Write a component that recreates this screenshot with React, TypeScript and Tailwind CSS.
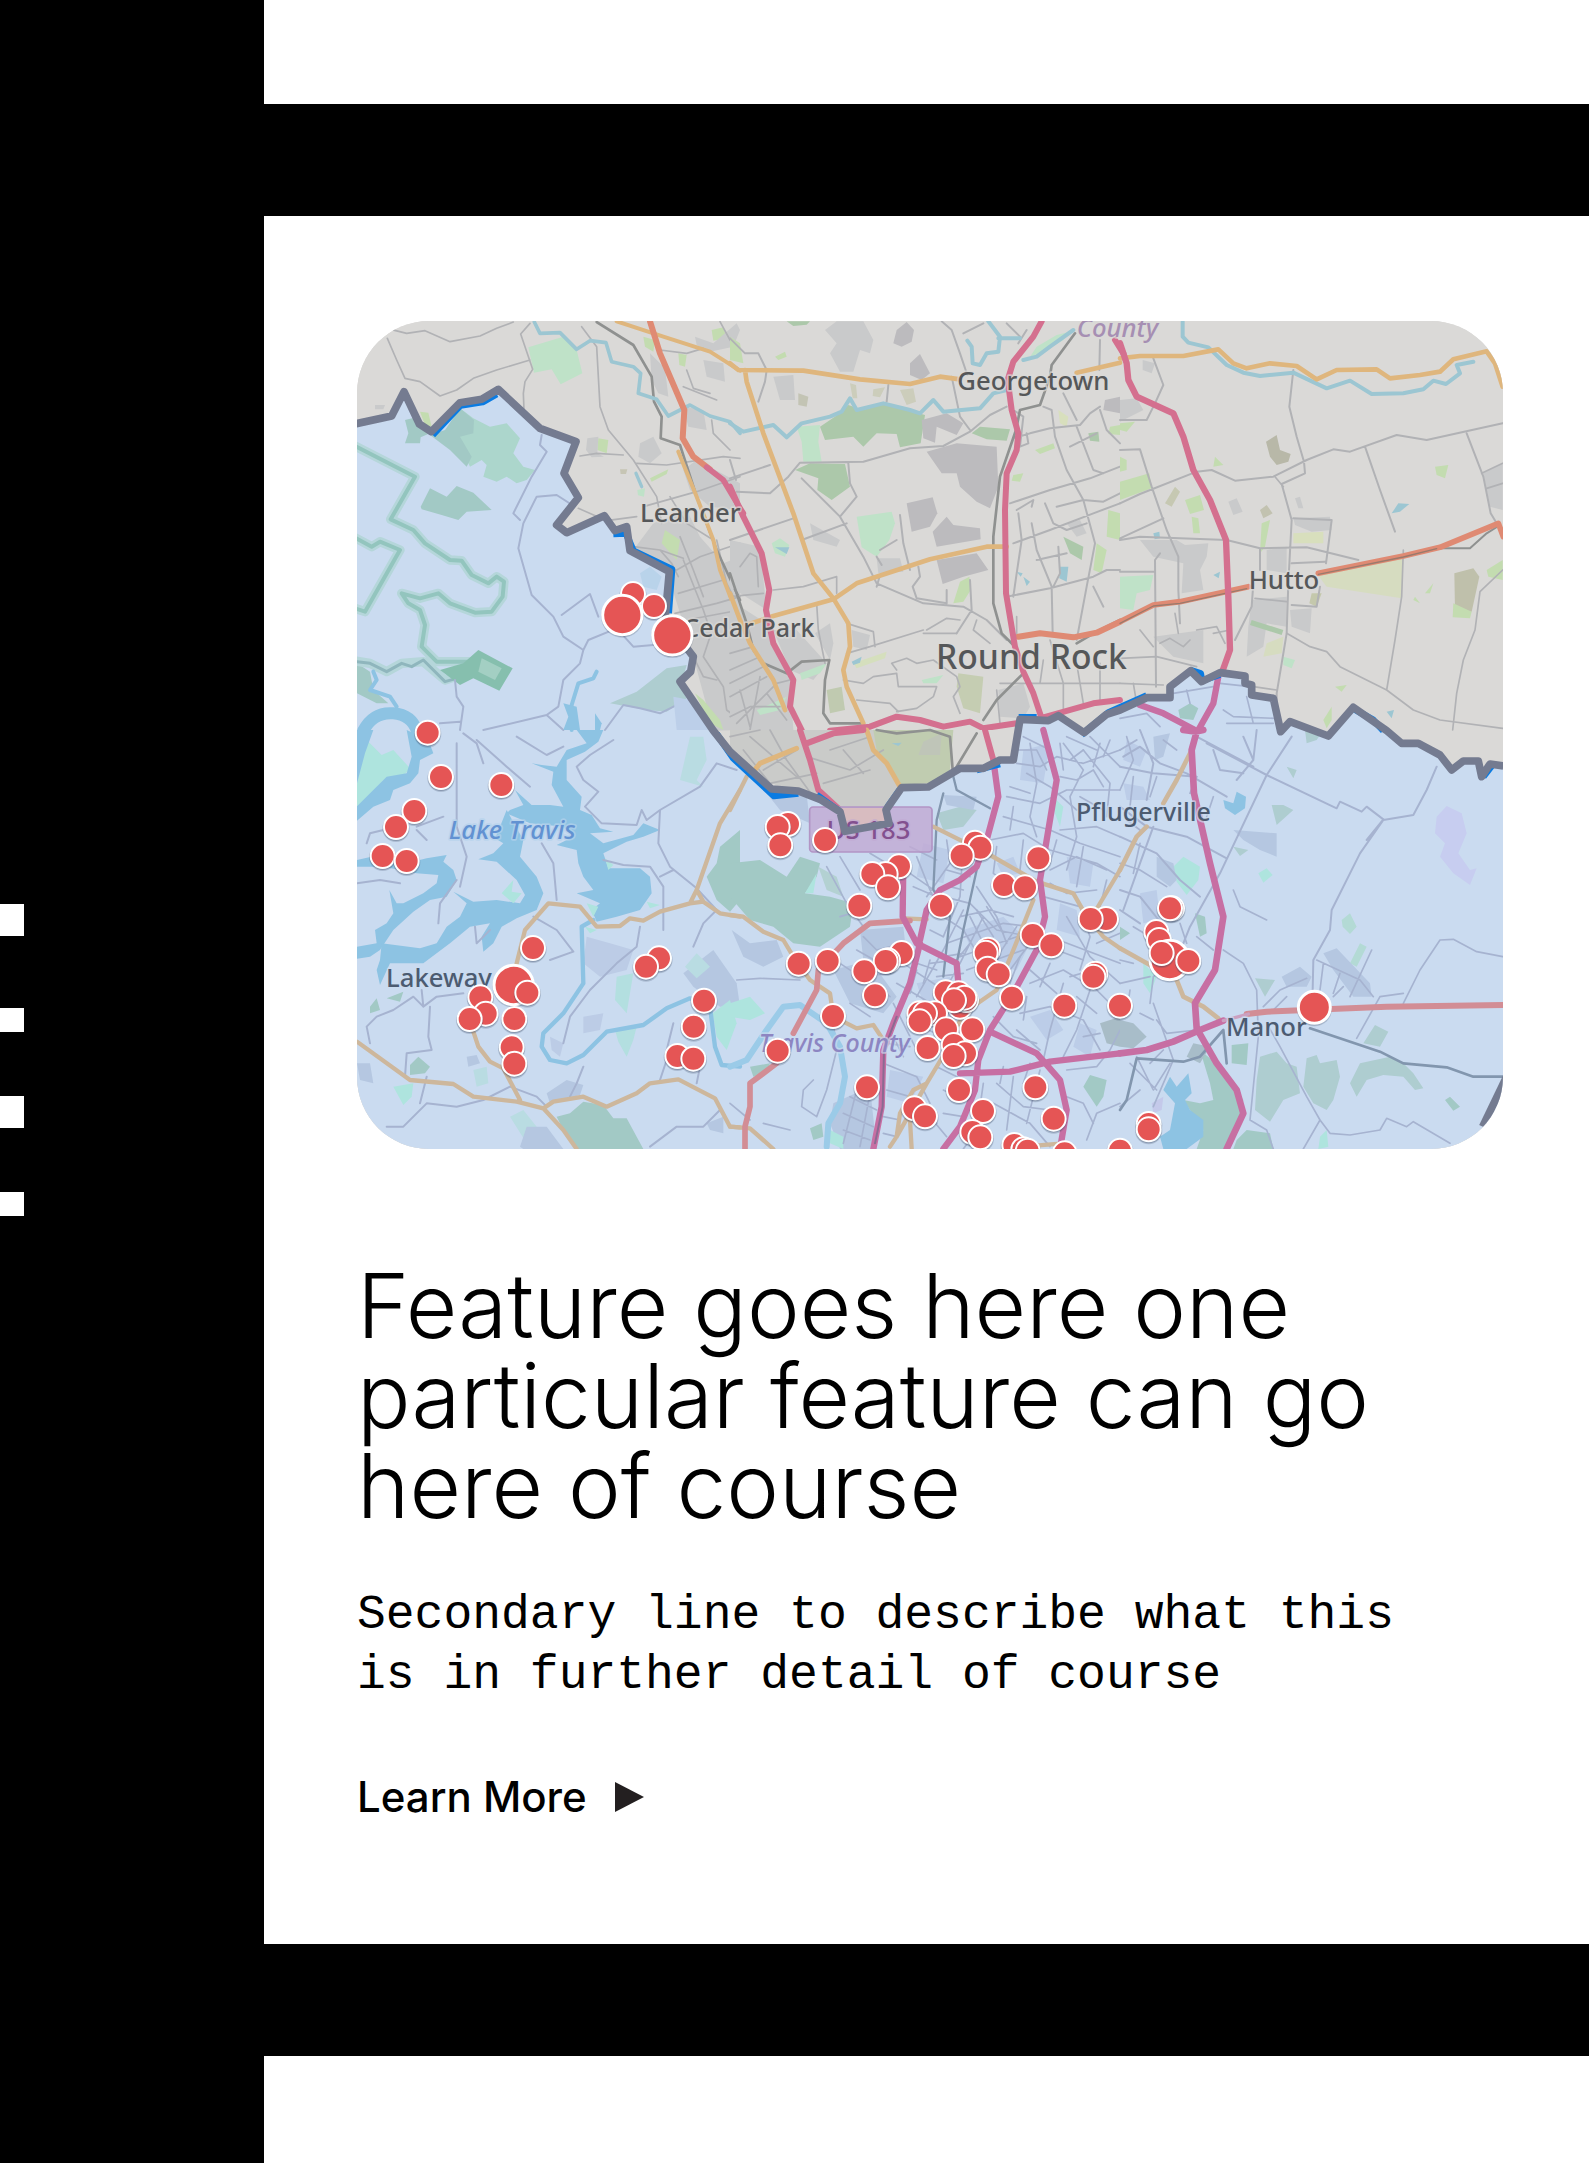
type Shape = { d: string; c: string; w?: number };
type Sheet = { x: number; y: number; shapes: Shape[] };

const MINOR = "#b1b2b5";
const RAIL = "#8f9190";
const ORANGE = "#dfb67d";
const PINK = "#d4708f";
const CORAL = "#df8a73";
const STREAM = "#9cc6d2";
const TOWN = "#c9cacb";
const STONE = "#bcbbbe";
const WOOD = "#acc8aa";
const MINT = "#bfe2c8";
const LIME = "#c3dcb0";

const B_MINOR = "#a6b3d0";
const B_RAIL = "#8296ae";
const B_ORANGE = "#cdb79c";
const B_PINK = "#c76fa3";
const B_CORAL = "#d28d95";
const B_WATER = "#8dc3e3";
const B_WOOD = "#a2c9c5";
const B_PARK = "#aecdd0";
const B_TOWN = "#b5c7e1";
const B_MINT = "#aee4de";
const B_RIDGE = "#93c5be";

const REGION =
  "M0 345L125 318L162 245L208 342L244 365L330 278L395 268L445 238L570 355L678 395L642 490L685 563L620 645L650 668L763 617L795 662L830 650L840 722L958 785L945 930L1030 1040L1022 1085L990 1115L1090 1262L1140 1325L1265 1437L1345 1443L1410 1468L1470 1505L1485 1564L1617 1540L1608 1500L1655 1433L1735 1431L1830 1375L1900 1375L1950 1350L1990 1350L2010 1228L2095 1232L2125 1217L2202 1268L2270 1213L2310 1200L2390 1163L2460 1163L2460 1130L2522 1082L2555 1115L2610 1088L2685 1098L2685 1120L2705 1125L2705 1155L2770 1165L2792 1265L2820 1235L2935 1278L3010 1192L3110 1262L3155 1300L3205 1300L3270 1335L3305 1380L3340 1353L3385 1353L3395 1400L3420 1362L3460 1368";

const SLIVERS =
  "M248 375L332 286L398 276L440 252M790 672L828 670L850 722L966 778L956 910M1100 1272L1150 1345L1272 1458L1345 1450M1400 1455L1466 1502M1612 1492L1650 1438M1880 1380L1950 1362M2006 1222L2060 1222M2195 1274L2275 1208L2390 1157M2520 1080L2552 1090L2556 1112L2610 1094M3010 1196L3070 1230L3100 1262M3400 1400L3425 1368";

const LAND: Sheet[] = [
  {
    x: 0,
    y: 0,
    shapes: [
      { d: "M535 112L640 80L680 120L697 190L632 223L605 178L552 188Z", c: MINT },
      { d: "M745 385L775 390L770 430L742 420Z", c: LIME },
      { d: "M712 385L745 380L742 430L762 440L725 442L708 420Z", c: TOWN },
      { d: "M1085 60L1120 52L1130 85L1090 92Z", c: LIME },
      { d: "M1035 80L1090 100L1160 40L1170 60L1150 110L1080 125L1040 105Z", c: TOWN },
      { d: "M985 130L1010 135L1005 170L988 165Z", c: LIME },
      { d: "M880 80L915 90L910 125L885 110Z", c: LIME },
      { d: "M900 130L945 175L955 260L925 250L905 210Z", c: TOWN },
      { d: "M1060 150L1120 160L1125 215L1070 200Z", c: TOWN },
      { d: "M870 400L910 380L935 430L900 460L865 440Z", c: TOWN },
      { d: "M75 285L105 285L100 298L75 298Z", c: TOWN },
      { d: "M1000 290L1060 300L1070 360L1015 350Z", c: TOWN },
      { d: "M910 640L1010 600L1050 680L1120 760L1170 740L1170 1260L1090 1262L1030 1040L950 780L850 720Z", c: TOWN },
      { d: "M1000 480L1040 450L1170 520L1170 600L1080 590L1020 540Z", c: TOWN },
      { d: "M945 660L990 690L980 750L935 700Z", c: LIME },
      { d: "M862 540L885 535L882 560L864 556Z", c: MINT },
      { d: "M900 505L955 478L950 492L905 515Z", c: LIME },
      { d: "M1035 1150L1060 1170L1110 1230L1120 1260L1080 1240Z", c: LIME },
      { d: "M810 478L832 478L828 492L812 492Z", c: "#c6c5b4" },
      { d: "M210 305L235 308L245 350L225 345Z", c: LIME },
      { d: "M110 55L170 70L225 62L300 95L390 78L440 55L490 36M112 85L140 150L165 205L210 215L270 258L320 240L370 205L440 180L540 150M540 40L512 72L548 178L525 215L520 250L522 300M695 50L740 110L750 290L775 360L850 450L920 560L935 640", c: MINOR, w: 5 },
      { d: "M690 438L740 430L820 435M860 460L950 465L1120 440L1170 445M880 590L1040 545L1170 500M930 720L1000 745M1110 35L1140 90L1170 130M930 120L1010 130L1060 115M1000 230L1100 270M1010 180L1030 235L1080 250M1085 330L1090 370L1140 420M685 595L770 632L860 620M960 560L1010 640L1090 690M850 710L930 720L965 760L985 800M980 780L1050 740L1170 700M985 850L1120 810M1000 750L1060 900L1080 960M990 680L1030 780L1060 860M1080 980L1060 1040L1120 1130L1130 1200L1170 1230M975 910L1100 880L1170 860M1030 1040L1060 1100L1100 1110M1010 930L1170 900M1100 690L1130 820L1150 860", c: MINOR, w: 5 },
      { d: "M740 36L850 105L905 200L912 275L935 320L932 385L990 405L1040 560L1100 720L1170 870", c: RAIL, w: 8 },
      { d: "M553 36L570 70L630 68L680 118L720 92L768 98L785 155L850 170L872 190L865 250L920 268L955 318L1020 285L1080 318L1140 335L1170 370", c: STREAM, w: 11 },
      { d: "M858 490L875 530", c: STREAM, w: 10 },
      { d: "M800 34L940 80L1080 125L1170 182M985 425L1040 560L1090 690L1110 780L1170 935", c: ORANGE, w: 12 },
      { d: "M900 34L930 130L1003 300L998 385L1030 440L1080 478", c: CORAL, w: 18 },
      { d: "M1070 472L1120 510L1160 578L1180 610", c: PINK, w: 17 },
    ],
  },
  {
    x: 1140,
    y: 0,
    shapes: [
      { d: "M285 60L320 34L400 34L430 90L420 130L390 120L370 185L330 185L300 130L320 100Z", c: TOWN },
      { d: "M490 100L500 60L530 36L552 60L545 95L515 110Z", c: STONE },
      { d: "M540 160L570 132L600 190L575 210L540 195Z", c: STONE },
      { d: "M130 200L190 195L195 270L150 270Z", c: TOWN },
      { d: "M205 250L235 260L230 290L205 285Z", c: "#c3c4b4" },
      { d: "M360 220L378 225L382 265L368 265ZM430 238L465 232L450 262L428 258ZM510 240L550 235L558 275L530 285Z", c: "#cccdbb" },
      { d: "M170 34L240 34L230 44L190 48Z", c: WOOD },
      { d: "M135 140L165 125L170 140L145 150Z", c: LIME },
      { d: "M0 80L30 100L40 160L0 150Z", c: LIME },
      { d: "M270 350L330 310L355 285L400 300L460 280L530 300L585 315L572 400L510 412L500 372L440 370L400 410L370 380L285 390Z", c: WOOD },
      { d: "M200 350L270 345L265 395L275 455L220 455L215 395Z", c: MINT },
      { d: "M195 480L240 460L345 462L360 530L305 570L262 540L265 505Z", c: WOOD },
      { d: "M575 330L650 310L700 340L680 375L620 350L615 398L580 385Z", c: STONE },
      { d: "M590 425L680 400L800 410L805 530L780 595L740 575L690 530L680 490L635 490Z", c: STONE },
      { d: "M725 370L750 350L840 358L830 392L770 388Z", c: WOOD },
      { d: "M530 580L608 562L622 610L600 650L545 665Z", c: STONE },
      { d: "M608 665L650 620L670 645L750 655L752 688L620 710Z", c: STONE },
      { d: "M620 750L740 730L775 780L700 800L638 822Z", c: STONE },
      { d: "M380 620L485 605L495 640L478 690L440 740L395 712Z", c: MINT },
      { d: "M440 745L510 745L520 785L445 790Z", c: TOWN },
      { d: "M670 880L690 815L718 800L722 840L700 875Z", c: LIME },
      { d: "M125 700L150 685L178 705L165 740L135 730Z", c: MINT },
      { d: "M135 712L178 712L170 732Z", c: STREAM },
      { d: "M920 110L980 75L1020 65L1000 90L940 125L900 140Z", c: MINT },
      { d: "M850 495L880 490L870 515L845 512Z", c: LIME },
      { d: "M915 420L970 400L975 415L930 432Z", c: LIME },
      { d: "M1075 370L1105 365L1108 395L1080 392Z", c: WOOD },
      { d: "M985 300L1015 320L1010 350L990 340Z", c: "#d8dfbd" },
      { d: "M1000 680L1060 710L1055 750L1020 730Z", c: WOOD },
      { d: "M990 770L1015 770L1010 815L988 805Z", c: STREAM },
      { d: "M1100 700L1130 720L1115 790L1090 780Z", c: LIME },
      { d: "M1135 600L1170 610L1170 690L1130 680Z", c: LIME },
      { d: "M1125 270L1170 260L1170 310L1120 300Z", c: STONE },
      { d: "M1140 350L1170 345L1170 375L1135 372Z", c: LIME },
      { d: "M0 690L90 710L110 900L0 830Z", c: TOWN },
      { d: "M0 870L110 940L180 1100L190 1260L0 1260Z", c: TOWN },
      { d: "M130 960L200 960L290 1060L250 1110L180 1080Z", c: TOWN },
      { d: "M50 910L90 930L95 1040L40 1000Z", c: TOWN },
      { d: "M255 970L300 940L310 1000L300 1050Z", c: TOWN },
      { d: "M365 960L420 975L410 1020L370 1010Z", c: TOWN },
      { d: "M290 1140L335 1130L345 1200L300 1210Z", c: "#c0cab0" },
      { d: "M685 1090L760 1100L750 1210L700 1195L680 1130Z", c: "#c5cdb2" },
      { d: "M80 1200L170 1160L150 1200L90 1215Z", c: MINT },
      { d: "M210 1090L290 1060L270 1090L215 1110Z", c: MINT },
      { d: "M575 1110L640 1095L620 1120L580 1120Z", c: MINT },
      { d: "M370 1060L470 1025L465 1045L380 1075Z", c: "#d5dfbd" },
      { d: "M365 1055L395 1040L390 1058L370 1065ZM860 785L878 790L872 800ZM880 800L900 815L890 828Z", c: STREAM },
      { d: "M805 1140L880 1120L900 1190L880 1225L810 1220Z", c: TOWN },
      { d: "M1010 640L1050 630L1070 670L1040 680Z", c: TOWN },
      { d: "M240 640L330 690L320 710L250 690Z", c: TOWN },
      { d: "M0 85L45 130L85 130L110 180L105 215L85 275M470 275L475 225M635 34L665 60L690 130L712 195M0 450L18 510M0 505L120 465M20 545L120 550L175 500L210 458L400 455L540 415L640 408L720 365L780 315L830 290M215 505L330 620L400 740L440 820L580 880L700 890L770 930L830 990M355 460L360 520L380 560L330 620M510 615L520 700L540 780M0 690L190 625M215 690L350 640M440 830L450 795M450 720L500 690M455 765L440 740M565 770L570 800L548 830L560 865L650 880M650 880L650 840M720 810L725 900L680 970", c: MINOR, w: 6 },
      { d: "M665 200L690 320L720 360M850 385L900 370L960 355M940 290L965 300L975 380L1010 480L1060 570L1095 700L1070 830L1040 990M840 580L960 540L1080 505L1170 470M850 700L960 660L1090 610L1170 580M830 860L960 835L1090 800L1130 780L1170 780M905 640L920 720L965 830L968 970M865 610L875 690L860 790L850 860M945 580L970 640L1010 660L1070 640M960 355L1050 345L1080 310L1110 290M1040 350L1090 480L1120 490M1020 410L1100 370M1110 90L1108 180M985 710L990 790L970 830M920 750L1010 730M1090 830L1120 890M860 600L910 570L905 590M980 590L1060 570L1120 575L1170 550M1000 250L1040 330M1110 300L1130 360L1170 400M700 70L760 40M830 40L870 80M865 100L890 60M850 300L880 320L870 410L895 400L890 370", c: MINOR, w: 6 },
      { d: "M0 860L100 850M30 770L60 730L80 740L85 830M130 840L220 830L320 800L320 850M260 880L265 960L285 1060M350 940L430 965L435 1010M500 1080L485 1060L530 1045L560 1060L610 1050L680 1100L690 1130L670 1160L690 1210M500 1090L505 1130L620 1130L610 1160L560 1195L500 1205M590 960L650 925L690 930M580 970L680 970M340 1110L400 1120L430 1100L500 1090M350 1030L420 1010L580 960M810 1120L1170 1120M960 990L1000 1120L1000 1215M800 1140L810 1240M860 920L860 970L850 1010M380 1170L480 1180L505 1205M0 1080L90 1040M0 1160L110 1100M20 1240L140 1120L180 1110M0 1220L60 1190L150 1190M90 1100L60 1260M740 930L730 960L780 1000M0 1030L70 1010M0 1120L100 1070M30 1140L60 1250M110 1150L170 1230M940 1050L930 1120M1040 1060L1060 1180M1110 1060L1110 1170", c: MINOR, w: 5 },
      { d: "M0 790L50 940L70 1020L100 1060L170 1090L215 1055L298 1050L285 1110L280 1210L300 1240L400 1240M1035 70L965 165L960 200L930 285L870 300L858 360L810 500L790 680L790 880L815 970L850 1005M880 1090L800 1170L760 1230M1040 1000L1100 965L1170 930", c: RAIL, w: 8 },
      { d: "M0 340L40 365L130 345L170 382L215 340L300 320L335 305L360 265L380 300L460 280L540 300L570 310L610 270L640 305L750 295L790 250L830 240M775 34L810 80L805 125L770 130L750 165L728 160L725 110L712 92M805 85L870 85M1030 60L960 110L920 140L880 150", c: STREAM, w: 12 },
      { d: "M0 160L25 180L220 182L390 208L540 222L630 200L690 208M45 180L50 215L100 370L190 610L250 790L310 865L355 940L360 1010L340 1080L350 1130L400 1240M50 945L130 918L310 868L380 820L600 748L770 710L830 710M0 850L30 930L60 1000L130 1110L165 1200M1040 188L1170 158", c: ORANGE, w: 14 },
      { d: "M865 980L930 970L1030 982L1100 968L1170 935", c: CORAL, w: 18 },
      { d: "M935 34L910 80L850 155L833 210L845 300L865 370L860 420L830 490L825 600L828 850L855 1010L880 1085L910 1150L935 1225M1155 90L1180 130M0 530L40 620L95 730L118 840L108 900L130 1000L190 1110L180 1190L215 1260M300 1262L420 1250L500 1220L570 1230L640 1250L720 1235L760 1255L860 1240L930 1225L1090 1180L1170 1170", c: PINK, w: 18 },
    ],
  },
  {
    x: 2310,
    y: 0,
    shapes: [
      { d: "M0 270L50 265L70 300L0 335Z", c: TOWN },
      { d: "M0 340L45 335L20 365L0 360Z", c: LIME },
      { d: "M0 515L88 490L95 535L0 570Z", c: LIME },
      { d: "M0 440L20 450L20 480L0 485Z", c: LIME },
      { d: "M68 150L105 160L95 190L68 180Z", c: TOWN },
      { d: "M438 395L470 375L480 420L512 432L505 455L470 465L450 440Z", c: "#b8b8a8" },
      { d: "M195 570L240 555L252 600L210 612Z", c: LIME },
      { d: "M420 600L440 585L458 610L430 625Z", c: "#c2c2b0" },
      { d: "M425 640L450 630L435 710L420 730Z", c: LIME },
      { d: "M135 580L165 530L180 545L155 590Z", c: "#c6c8b2" },
      { d: "M215 620L235 625L240 670L220 670Z", c: LIME },
      { d: "M325 575L350 565L368 605L340 615Z", c: TOWN },
      { d: "M525 565L540 560L550 595L535 595Z", c: TOWN },
      { d: "M520 625L630 620L635 660L575 665L525 645Z", c: TOWN },
      { d: "M520 670L610 665L610 700L520 700Z", c: "#d8dfbd" },
      { d: "M60 690L170 690L195 705L265 700L260 740L240 780L250 840L185 850L190 760L100 740Z", c: TOWN },
      { d: "M0 800L100 795L90 840L50 850L40 900L0 895Z", c: MINT },
      { d: "M440 720L500 710L500 790L440 780Z", c: TOWN },
      { d: "M395 870L500 860L500 950L440 940L430 1010L380 1040L385 950Z", c: TOWN },
      { d: "M510 900L575 895L570 970L515 950Z", c: TOWN },
      { d: "M590 790L850 745L845 865L620 830Z", c: "#d6dcc0" },
      { d: "M1003 790L1060 775L1078 800L1055 905L1005 900Z", c: "#bfc0ab" },
      { d: "M1000 880L1055 905L1050 925L998 922Z", c: LIME },
      { d: "M1100 780L1148 750L1148 810L1105 800Z", c: LIME },
      { d: "M1090 490L1148 460L1148 600L1110 590Z", c: TOWN },
      { d: "M945 470L985 465L975 505L950 495Z", c: LIME },
      { d: "M815 610L835 580L868 582L840 605Z", c: STREAM },
      { d: "M100 670L118 665L120 685L104 688ZM280 795L300 785L296 805ZM800 1205L822 1200L815 1225Z", c: STREAM },
      { d: "M575 850L605 850L590 890L568 880Z", c: "#c4c8ac" },
      { d: "M395 930L490 960L485 975L390 945Z", c: WOOD },
      { d: "M490 1040L525 1050L515 1075L490 1065Z", c: MINT },
      { d: "M645 1130L680 1125L665 1145Z", c: LIME },
      { d: "M610 1230L635 1190L635 1230L620 1255Z", c: LIME },
      { d: "M440 1000L490 980L485 1030L430 1040Z", c: "#d6dcc0" },
      { d: "M285 440L310 465L280 470ZM915 850L940 820L930 850ZM885 860L900 880L880 870Z", c: LIME },
      { d: "M100 980L250 960L250 1060L160 1040Z", c: TOWN },
      { d: "M520 180L508 290L530 380L552 455L555 490L485 522L515 630L505 820L500 970L470 1150L470 1200M735 410L780 540L825 665M1040 370L1090 500L1112 610L1130 640M0 580L60 552L230 485L275 480L345 512L460 500L560 450L640 418L690 425L830 375L920 390L1148 340M100 145L130 225L105 280L80 330L0 330M0 420L60 418L95 530L140 660L175 740L175 840L180 940M0 685L130 625M0 690L60 680L320 690L420 715L560 712L715 750M120 730L105 750L108 1130M0 785L105 785M400 820L395 890L345 990M420 715L420 780M520 625L635 630L618 760M515 760L615 755M515 885L590 890L600 830", c: MINOR, w: 6 },
      { d: "M850 720L845 860L825 990L800 1140M500 970L570 1010L620 1025L660 1070L800 1140L880 1200L960 1230L1148 1255M1148 780L1080 845L1065 960L1030 1050L1010 1150L998 1260M405 865L500 875M0 1045L110 1040L230 1070M165 910L175 970M280 970L330 960M0 1120L130 1125M40 1120L50 1180M60 960L100 1010M230 960L290 950L315 1000M1085 490L1148 460M1100 535L1148 520M465 500L490 530M400 1130L470 1140M120 1000L150 985L190 1010L210 990", c: MINOR, w: 5 },
      { d: "M950 715L1050 715L1100 670L1140 645", c: RAIL, w: 6 },
      { d: "M188 36L188 80L205 98L265 112L320 165L370 188L420 198L520 188L620 235L690 212L755 252L850 250L910 238L940 212L978 222L1020 190L1010 165L1060 155", c: STREAM, w: 12 },
      { d: "M0 145L60 138L190 138L295 118L340 160L380 175L450 160L530 168L590 208L650 180L770 178L810 205L900 195L960 185L1000 148L1100 124L1125 160L1148 230", c: ORANGE, w: 14 },
      { d: "M0 935L100 885L180 875L385 830M595 790L850 738L960 712L1135 640L1150 680", c: CORAL, w: 17 },
      { d: "M0 940L100 888L180 880L380 836M595 793L850 741L950 716", c: "#9a7a6c", w: 4 },
      { d: "M0 100L20 160L25 210L50 260L160 310L190 380L220 480L270 570L318 690L325 860L330 1020L305 1090", c: PINK, w: 19 },
    ],
  },
  {
    x: 1140,
    y: 1260,
    shapes: [
      { d: "M0 0L460 0L520 170L440 260L340 290L0 80Z", c: "#cacbc9" },
      { d: "M430 0L670 0L660 120L600 160L510 165L440 60Z", c: "#c0ccb0" },
      { d: "M565 75L580 35L635 10L630 75Z", c: "#bfc5b8" },
      { d: "M690 100L740 0L860 0L840 90Z", c: "#dad9d7" },
      { d: "M485 40L515 38L505 48Z", c: STREAM },
      { d: "M0 20L90 0M100 120L200 60M40 60L120 160L260 130M230 80L360 120L460 60M280 160L420 120M60 20L200 140M120 0L170 90L250 200M300 60L420 20M340 60L400 130", c: MINOR, w: 5 },
      { d: "M440 0L500 10L600 0L660 20L668 120M740 10L680 110", c: RAIL, w: 8 },
      { d: "M410 0L430 60L470 100L510 170L550 225M200 55L90 100L50 150L0 240", c: ORANGE, w: 15 },
      { d: "M210 0L240 90L265 180L330 240M230 40L310 10L400 0M765 0L790 90", c: PINK, w: 18 },
    ],
  },
];

const COUNTY: Sheet[] = [
  {
    x: 0,
    y: 0,
    shapes: [
      { d: "M165 330L205 320L240 370L212 382L210 400L165 400L175 370Z", c: B_WOOD },
      { d: "M285 370L330 295L370 325L420 350L470 340L510 385L490 430L520 470L555 480L530 510L500 520L470 500L440 515L400 500L410 465L395 450L360 470L340 430L320 420L270 385Z", c: "#acd6cc" },
      { d: "M240 375L285 360L330 295L372 330L370 370L330 380L365 440L350 470L300 420Z", c: B_WOOD },
      { d: "M212 590L240 535L290 560L320 528L370 548L425 600L350 605L325 630L275 615L215 598Z", c: B_WOOD },
      { d: "M780 1180L860 1145L950 1075L1010 1065L1000 1100L985 1120L1010 1165L950 1205L890 1200Z", c: B_PARK },
      { d: "M870 790L900 770L935 800L920 840L880 830Z", c: "#b9d3ea" },
      { d: "M21 1060L60 1085L70 1140L115 1180L80 1180L21 1150Z", c: B_WOOD },
      { d: "M0 400L195 500L122 628L190 660L225 700L300 750L335 752L365 795L415 820L440 800L462 815L458 860L425 905L375 908L300 880L265 850L210 865L155 850L175 880L210 900L225 945L215 1010L260 1055L355 1055M0 675L65 710L90 695L150 720L45 905L0 890M0 1050L60 1060L110 1085L155 1060L220 1055L285 1110L345 1090", c: "#b5d6da", w: 28 },
      { d: "M0 400L195 500L122 628L190 660L225 700L300 750L335 752L365 795L415 820L440 800L462 815L458 860L425 905L375 908L300 880L265 850L210 865L155 850L175 880L210 900L225 945L215 1010L260 1055L355 1055M0 675L65 710L90 695L150 720L45 905L0 890", c: B_RIDGE, w: 12 },
      { d: "M21 1055L60 1060L110 1085L155 1060L185 1070L220 1050L285 1115L320 1105", c: "#8fb6bd", w: 9 },
      { d: "M340 1060L385 1020L488 1075L448 1142L370 1105L330 1125L270 1080Z", c: "#86bfae" },
      { d: "M395 1045L455 1075L435 1110L385 1085Z", c: "#a3cfc3" },
      { d: "M575 375L570 405L590 425L545 500L490 610L510 630M620 555L560 560L520 640L505 715L545 855L610 920L640 980L700 1020M620 555L690 600M635 915L720 852L745 920M700 1020L715 990L800 955L850 1010L910 1005M700 1020L690 1060L640 1110L625 1190L590 1215L400 1260M590 1215L640 1260M765 1260L820 1185L870 1195L930 1210L990 1180M315 1110L320 1160L340 1190L330 1260M270 1240L330 1235", c: B_MINOR, w: 6 },
      { d: "M740 1085L730 1105L685 1120L665 1185L665 1260", c: B_WATER, w: 12 },
      { d: "M640 1180L680 1190L690 1260L640 1260L655 1220Z", c: B_WATER },
      { d: "M735 1210L755 1240L750 1260L735 1260Z", c: B_WATER },
      { d: "M70 1085L80 1110L60 1140L120 1160L140 1190", c: B_WATER, w: 12 },
      { d: "M40 1262Q70 1205 130 1210Q185 1215 200 1262", c: B_WATER, w: 36 },
      { d: "M970 1160L1050 1175L1090 1260L980 1260Z", c: "#bccfe9" },
    ],
  },
  {
    x: 0,
    y: 1260,
    shapes: [
      { d: "M50 30L95 75L130 60L180 115L150 150L100 150L21 240L21 160Z", c: B_MINT },
      { d: "M0 0L70 0L45 70L21 160L0 160Z", c: B_WATER },
      { d: "M170 0L235 30L250 70L210 90L205 130L180 160L130 180L120 210L70 230L0 290L0 250L70 180L110 140L170 130L185 80Z", c: B_WATER },
      { d: "M21 390L110 370L170 400L230 385L290 375L280 395L310 420L320 450L290 500L240 510L190 545L130 600L90 660L60 680L0 690L21 650L80 640L75 600L110 580L130 550L118 480L140 520L160 520L220 490L260 460L265 435L200 430L100 410L21 410Z", c: B_WATER },
      { d: "M90 690L95 640L210 655L260 640L290 590L330 560L350 520L310 485L370 515L440 510L510 520L525 495L500 450L440 395L385 388L430 370L460 340L435 325L450 290L470 240L520 330L510 380L560 440L580 490L560 540L500 565L455 590L430 640L400 665L395 620L420 580L360 590L300 640L220 700L120 700L90 765L80 720Z", c: B_WATER },
      { d: "M680 0L760 0L745 35L705 65L650 90L650 150L695 200L690 240L725 255L750 295L790 305L720 310L760 340L850 315L880 280L930 300L880 320L830 335L760 370L775 415L870 415L900 440L905 490L870 540L800 560L740 575L725 540L750 520L680 490L730 480L700 440L685 400L680 360L620 345L670 320L640 290L540 280L470 250L480 240L520 225L495 180L545 225L600 225L640 230L605 165L610 125L545 100L575 105L620 110L650 60L710 40Z", c: B_WATER },
      { d: "M455 490L490 450L485 485L515 490L490 520Z", c: B_MINT },
      { d: "M765 385L790 405L775 420Z", c: B_MINT },
      { d: "M990 150L1020 20L1060 20L1070 90L1040 150L1060 170Z", c: "#b9dce2" },
      { d: "M1070 440L1100 400L1110 350L1170 300L1170 510L1140 545L1100 510Z", c: B_WOOD },
      { d: "M710 520L745 530L730 560ZM890 515L930 525L900 535ZM705 590L740 600L720 610Z", c: B_MINT },
      { d: "M710 620L780 640L850 660L830 720L750 740L700 700ZM700 860L760 850L750 900L700 910ZM600 920L640 940L630 980L605 960Z", c: "#bccce6" },
      { d: "M1000 730L1090 660L1160 760L1170 830L1110 830L1030 770Z", c: B_TOWN },
      { d: "M1005 710L1040 670L1080 710L1040 745Z", c: "#b9dce2" },
      { d: "M1088 850L1140 810L1160 880L1130 960L1100 920Z", c: B_MINT },
      { d: "M795 900L860 890L850 930L830 980L805 935ZM800 740L850 730L830 850L795 810Z", c: "#b3dfe0" },
      { d: "M180 1005L205 980L240 1010L225 1030L180 1035ZM60 830L80 805L90 840L60 850ZM110 805L160 785L150 815Z", c: B_WOOD },
      { d: "M130 1070L190 1060L185 1100L160 1125Z", c: B_MINT },
      { d: "M370 1020L410 1010L415 1060L380 1070ZM480 1160L520 1140L560 1190L530 1240Z", c: "#b9dce2" },
      { d: "M350 980L380 975L390 1000L355 1010ZM21 1000L60 1000L70 1060L30 1050Z", c: B_TOWN },
      { d: "M510 1250L530 1190L590 1190L640 1257L520 1257Z", c: B_TOWN },
      { d: "M620 1160L660 1150L700 1115L760 1125L790 1165L830 1165L860 1220L880 1257L680 1257L640 1200Z", c: B_WOOD },
      { d: "M590 1090L650 1050L700 1065L690 1095L600 1120ZM1070 1180L1120 1160L1120 1210L1080 1200Z", c: B_TOWN },
      { d: "M320 40L320 290L350 380L330 470M340 10L380 40L400 100M380 30L470 110L540 170M500 20L590 75L640 50M790 30L720 75L680 110L700 150L745 185L705 230L755 280L860 285L875 240L890 270L930 240L1050 170L1100 100L1160 120M930 240L925 340L960 410L1040 475L1100 540L1060 580L1030 650M575 340L610 400L620 510M21 460L90 450L150 460M320 450L270 520L265 580M50 340L60 310L100 300L150 310M200 290L280 260M200 300L230 330M760 390L820 405L900 410L940 470L940 600M930 440L970 420M375 590L380 640L420 600M550 560L620 600L670 665L600 690M870 590L860 650L800 700L720 780L660 860L640 940", c: B_MINOR, w: 6 },
      { d: "M60 940L50 890L80 860L130 840L190 800L220 830L260 800L340 790M215 780L220 830M240 830L235 920L245 960L170 970L165 1040M230 1040L210 1120M110 1190L160 1190L230 1120L320 1130L400 1110L480 1070M345 870L370 900M480 1070L560 1100L590 1130M700 1010L680 1060L660 1100M950 990L930 1050M1050 1010L1040 1060M900 1250L980 1190L1060 1190L1110 1140M970 880L950 960", c: B_MINOR, w: 6 },
      { d: "M730 570L695 590L700 760L640 850L580 910L575 950L600 990L650 1000L700 975L770 905L880 885L950 835L1020 805L1080 830L1095 950L1115 1005L1170 1010", c: B_WATER, w: 13 },
      { d: "M495 720L525 600L595 520L690 530L740 590L810 588L840 565L880 572L930 545L1020 520L1040 480L1110 280L1170 180M1040 480L1060 515L1110 550L1170 560M1020 520L1060 515M21 935L180 1050L310 1062L370 1100L500 1115L580 1135L640 1200L680 1257M370 905L385 950L420 995L460 1015L510 1110M580 1135L610 1115L700 1100L770 1130L860 1090L900 1060L985 1048L1095 1105L1140 1190L1170 1192", c: B_ORANGE, w: 13 },
    ],
  },
  {
    x: 1140,
    y: 1260,
    shapes: [
      { d: "M0 400L90 390L170 440L210 380L270 400L260 440L225 490L300 500L370 520L360 590L270 650L190 640L130 590L60 570L0 500Z", c: B_WOOD },
      { d: "M265 410L320 440L340 500L290 480Z", c: "#b3d1d2" },
      { d: "M225 490L260 430L250 490Z", c: B_MINT },
      { d: "M5 600L60 640L140 630L160 680L100 710L40 680Z", c: B_TOWN },
      { d: "M0 820L60 800L105 850L60 870L0 860Z", c: B_MINT },
      { d: "M620 250L690 230L740 240L700 290L640 300Z", c: B_PARK },
      { d: "M640 195L740 200L730 240L650 225Z", c: B_TOWN },
      { d: "M110 190L230 195L240 280L150 240Z", c: B_TOWN },
      { d: "M390 600L520 590L530 680L450 730L400 690ZM310 720L420 690L500 800L460 850L360 820Z", c: B_TOWN },
      { d: "M310 1120L420 1070L440 1257L330 1257L300 1180Z", c: B_TOWN },
      { d: "M560 760L660 740L700 860L600 880ZM700 600L820 560L900 640L860 720L740 700Z", c: "#bccde8" },
      { d: "M580 340L660 360L640 460L560 440ZM880 60L960 40L940 160L870 150ZM1010 380L1090 400L1080 470L1020 460ZM990 520L1040 540L1050 620L980 600ZM480 1020L580 1040L540 1120L470 1100Z", c: "#bccde8" },
      { d: "M800 400L850 380L870 430L820 440ZM900 860L960 840L1000 900L950 930ZM1050 880L1100 900L1080 980L1030 950Z", c: "#bccde8" },
      { d: "M240 1195L275 1180L280 1220L250 1230Z", c: B_WOOD },
      { d: "M1060 1070L1080 1035L1130 1050L1120 1100L1100 1130Z", c: B_WOOD },
      { d: "M1110 880L1170 860L1170 950L1130 940Z", c: "#a8bcc6" },
      { d: "M300 1200L340 1220L340 1257L300 1240ZM760 1130L800 1150L770 1170Z", c: B_MINT },
      { d: "M970 200L1000 230L990 290L975 250Z", c: B_MINT },
      { d: "M60 1010L120 1000L110 1030L70 1040Z", c: B_WOOD },
      { d: "M210 750L90 745L20 750M290 410L350 520L400 590M330 380L390 480M310 880L320 960L290 1080L260 1160M260 1160L215 1130L220 1080L250 1050M100 1180L180 1200M0 1120L60 1170M420 370L470 400M560 380L600 480L640 560M700 330L690 500L640 620M650 330L660 400L590 500M540 430L640 500L720 520L800 600L900 620M640 560L700 600L760 700L830 770M600 700L680 690L720 640M620 740L700 730M740 470L800 560L830 640M690 560L780 540L850 560M650 640L820 580L900 590M690 680L860 620M710 720L880 660M560 800L640 660L700 540M600 860L690 700L760 560M790 700L860 590M840 720L900 640", c: B_MINOR, w: 5 },
      { d: "M860 100L930 110L980 80L1060 100L1170 60M830 200L930 220L1010 180L1170 180M820 260L960 300L1050 340L1170 380M900 40L920 160L900 260L920 320M1000 40L1060 120L1020 200L1040 320L1010 420M1060 60L1140 160L1130 260M1080 20L1170 110M860 60L920 60L950 120M990 140L1040 150L1090 120L1120 170M990 300L1100 290L1170 320M780 330L880 310L960 360L1100 400L1170 440M960 420L1040 380L1130 420M940 500L1050 530L1080 620L1050 720M1010 560L1080 680L1170 760M960 620L1170 700M900 760L1000 720L1100 780L1150 830M870 850L960 830L1060 870L1110 960M1000 760L960 900L940 990M1080 780L1040 900L1000 980M860 900L930 960M1070 1230L1100 1150L1170 1120M790 860L850 920L920 940", c: B_MINOR, w: 5 },
      { d: "M460 1000L560 1040L600 1120M470 1080L540 1100M620 1010L720 1060M640 1080L700 1110M360 1100L440 1140M340 1150L430 1190M340 1200L420 1230M380 1080L340 1240M420 1090L390 1250M760 1060L740 1200L700 1257M800 1060L880 1130L960 1140M790 1120L900 1180L960 1250M850 1040L830 1200M930 1020L890 1180M1010 1020L1100 1010L1140 960L1170 900M1010 1100L1060 1120L1090 1180M480 900L520 980M490 820L560 960M500 760L620 830M520 700L640 780M550 880L640 920M470 940L540 950", c: B_MINOR, w: 5 },
      { d: "M880 20L960 60M890 130L960 170L1040 240M1010 20L1100 60M1050 200L1120 240M840 170L900 190M990 40L1000 120M1110 40L1090 110M1020 90L1060 60M1140 30L1120 80M850 230L840 300M880 330L870 420M800 350L790 430L860 480M980 330L960 400M1060 350L1040 470M960 460L1010 490L1100 480M1130 450L1110 530M980 660L1060 690M1100 640L1170 610M1020 740L1090 720M870 680L840 760M960 700L930 770M900 720L980 790M1040 800L1100 850M890 800L880 870M1060 920L1110 910", c: B_MINOR, w: 5 },
      { d: "M540 350L620 390M550 470L620 500M600 600L640 620M650 420L720 440M660 470L700 480M720 560L760 640M740 540L790 620M770 530L820 610M640 680L700 670M530 640L560 700L620 720M560 720L540 790M600 690L580 760M330 560L400 540M400 620L440 660L520 640M380 660L450 700M330 700L390 740L480 730M430 760L480 800M360 820L420 860M820 1010L810 1060M900 1000L880 1060M640 1150L700 1160M600 1160L650 1220M560 1150L620 1180M460 1160L510 1170M460 1210L500 1220", c: B_MINOR, w: 5 },
      { d: "M665 120L680 180L780 235M640 190L620 270L610 480L660 560L640 740M740 420L700 600L680 700", c: B_RAIL, w: 7 },
      { d: "M0 1010L50 990L110 900L160 830L210 825L290 880L330 950L345 1040L330 1120L295 1180L290 1250", c: "#9bcbe8", w: 18 },
      { d: "M0 555L40 560L100 605L160 630L190 680L240 750L300 790L310 860L380 895L430 885L460 930M520 565L590 568M610 290L780 375L920 455L1030 490L1070 560L1120 620L1170 655M1170 420L1080 570M910 510L850 660L800 780L700 850L650 960L590 1060L500 1220L480 1250M590 1060L550 1080L510 1150L500 1220M540 1170L545 1257M0 1190L60 1195L130 1257M880 1250L1000 1240M0 240L50 140", c: B_ORANGE, w: 13 },
      { d: "M540 572L420 580L340 640L265 720L260 780L190 910M140 1000L60 1060L60 1130L45 1190L45 1257", c: B_CORAL, w: 17 },
      { d: "M790 90L805 200L770 330L740 410L690 450L630 480L590 540L570 630M520 400L518 560L560 640L680 700L685 760M570 640L540 760L490 880L460 960L455 1130L430 1257M940 0L980 150L950 330L930 450L945 560L920 660L850 790L780 900L745 990L735 1080L690 1190L640 1257M690 1030L840 1025L960 995L1170 970M780 905L920 970L990 1050L1010 1140L990 1257", c: B_PINK, w: 19 },
      { d: "M500 860L462 960L458 1130L435 1240", c: "#8b6a92", w: 6 },
    ],
  },
  {
    x: 2310,
    y: 0,
    shapes: [
      { d: "M175 1200L210 1180L235 1195L220 1230L180 1225Z", c: B_WOOD },
      { d: "M160 1150L280 1130M200 1140L210 1180M310 1200L340 1220L460 1225M320 1240L460 1240M300 1120L390 1130M0 1225L80 1210L120 1250M380 1160L400 1240", c: B_MINOR, w: 5 },
      { d: "M60 1185L130 1210L225 1260M295 1100L280 1180L235 1260", c: B_PINK, w: 19 },
      { d: "M-80 1165L0 1170", c: B_PINK, w: 18 },
    ],
  },
  {
    x: 2310,
    y: 1260,
    shapes: [
      { d: "M310 210L340 220L350 185L378 200L375 235L345 255L315 235Z", c: B_WATER },
      { d: "M160 410L190 380L240 410L235 450L200 495L170 455Z", c: B_MINT },
      { d: "M100 20L150 10L130 80L105 90ZM110 380L160 400L170 450L150 470L110 440ZM340 300L470 310L470 380L420 360L370 330Z", c: B_TOWN },
      { d: "M455 225L490 225L520 240L470 285ZM500 110L530 120L520 145ZM340 350L385 360L360 378Z", c: B_PARK },
      { d: "M555 0L610 0L590 30L560 40Z", c: B_PARK },
      { d: "M415 430L440 415L458 435L430 458Z", c: B_MINT },
      { d: "M950 260L980 228L1025 250L1040 310L1015 370L1050 420L1070 415L1050 465L1000 430L960 380L975 340L945 310Z", c: "#c7cdf0" },
      { d: "M665 570L690 550L710 590L690 612L668 590ZM690 700L720 640L740 650L710 710Z", c: "#b3dad5" },
      { d: "M610 670L650 655L750 760L755 800L700 800L640 720ZM485 740L540 710L575 740L560 770L500 770Z", c: B_TOWN },
      { d: "M60 490L110 480L120 570L70 580ZM20 30L80 60L60 110L10 90ZM10 160L70 170L90 210L20 210Z", c: "#bccde8" },
      { d: "M405 745L465 750L435 800ZM730 940L765 885L805 905L780 950Z", c: B_PARK },
      { d: "M420 980L470 965L500 1000L530 1010L540 1090L490 1110L450 1175L405 1140L410 1050Z", c: B_PARK },
      { d: "M560 985L590 975L600 1000L650 990L660 1040L640 1110L620 1140L580 1120L550 1070Z", c: B_PARK },
      { d: "M690 1060L720 1000L810 980L850 1000L880 1030L910 1075L885 1080L850 1040L790 1035L740 1050L710 1100Z", c: B_PARK },
      { d: "M335 945L385 940L380 1005L335 1000ZM975 1110L990 1100L1020 1130L1000 1142Z", c: B_WOOD },
      { d: "M240 960L300 1010L370 1110L360 1170L320 1257L230 1257L250 1200L190 1110L240 1120L280 1110L270 1060Z", c: B_WOOD },
      { d: "M350 1230L380 1200L450 1210L460 1257L340 1257Z", c: B_WOOD },
      { d: "M130 1080L150 1040L170 1070L205 1030L215 1090L195 1110L210 1140L250 1170L250 1220L200 1257L130 1257L120 1220L150 1200L165 1120Z", c: B_WATER },
      { d: "M0 870L40 880L80 920L40 955L0 950ZM200 980L220 940L270 950L240 1000Z", c: "#a8bdc9" },
      { d: "M95 1120L130 1100L125 1140L100 1150Z", c: "#c4c9ea" },
      { d: "M0 590L30 610L0 630ZM225 550L255 560L260 610L240 620Z", c: B_WOOD },
      { d: "M70 700L110 740L90 790L70 760ZM600 1220L620 1200L625 1250L595 1257Z", c: B_MINT },
      { d: "M10 80L60 50L120 100L200 130L320 200M260 40L440 135L650 235L660 215L725 245L740 230L790 268M515 20L440 135L300 430L210 590L150 740M230 20L400 110M370 20L400 90L350 150M410 0L400 90M280 60L300 120L370 130M0 60L50 30M0 110L100 130L230 140M60 0L100 100L80 210M0 230L80 290L200 320L320 385M100 290L60 400L10 540M0 320L110 370L180 450L240 500M0 480L60 500L140 600M0 540L60 580M950 110L920 180L880 255L790 270L720 370L635 540L630 600L580 690L578 780M790 268L740 330", c: B_MINOR, w: 6 },
      { d: "M590 690L720 750L760 800M755 660L690 800M780 800L710 925M310 660L370 700L410 780L415 920L390 1170L440 1200L460 1257M440 880L480 950L560 1100L600 1170L630 1210L690 1215L780 1200L800 1165L860 1190L880 1175L990 1240M600 1170L550 1257M850 820L900 720L960 630L1000 628L1070 665L1148 680M850 790L780 800M430 830L480 780L560 745M460 840L500 800M640 800L670 770M100 820L160 990L100 1130M90 820L100 740L150 700M0 760L90 740M110 870L140 910L230 900M340 480L360 530L440 570M610 700L600 780M660 730L640 790M0 1130L60 1080M30 1000L110 1080M50 980L100 1080L150 1000", c: B_MINOR, w: 5 },
      { d: "M20 20L40 90L0 180M130 30L170 60M40 140L30 230M110 140L90 200M20 270L60 300M230 140L210 190M280 200L260 260M60 340L40 430M0 400L60 420L140 470M40 590L90 620M0 690L40 700M230 620L280 660M180 580L200 640M30 780L20 850M60 850L100 870M130 960L90 1000", c: B_MINOR, w: 5 },
      { d: "M570 895L780 965L850 1000L980 1012L1060 1040L1148 1040M310 900L240 980L190 995L50 985L20 1110L0 1140M310 900L320 1000", c: B_RAIL, w: 8 },
      { d: "M215 60L170 150L130 220M80 290L50 320L0 420M0 655L90 705L170 750L190 800L250 830L295 865", c: B_ORANGE, w: 14 },
      { d: "M380 852L440 845L800 830L1148 825", c: B_CORAL, w: 18 },
      { d: "M190 0L230 5L215 60L222 190L245 290L270 400L310 560L285 720L225 820L230 895L290 1000L350 1080L370 1150L320 1257M0 970L80 960L160 935L240 900L310 872M225 5L250 0", c: B_PINK, w: 20 },
      { d: "M310 872L385 852", c: "#cba0c0", w: 10 },
    ],
  },
];

type Pin = [x: number, y: number, r?: number];

const PINS: Pin[] = [
  [849, 852], [912, 888], [817, 915, 56], [967, 976, 56],
  [233, 1268], [273, 1401], [454, 1425], [193, 1503], [138, 1551], [98, 1638], [170, 1653], [549, 1914],
  [491, 2025, 56], [532, 2048], [391, 2062], [407, 2111], [359, 2127], [493, 2127], [485, 2212], [493, 2261],
  [927, 1945], [888, 1970], [1062, 2072], [1031, 2150], [982, 2238], [1030, 2246],
  [1314, 1542], [1283, 1551], [1291, 1606], [1425, 1590], [1647, 1669], [1607, 1692], [1567, 1692], [1614, 1732],
  [1528, 1787], [1773, 1787], [1875, 1598], [1891, 1613], [1835, 1637], [2065, 1645], [1962, 1725], [2025, 1732],
  [2268, 1827], [2222, 1827], [2048, 1875], [2104, 1906], [1346, 1961], [1433, 1953], [1655, 1929], [1614, 1951],
  [1607, 1953], [1543, 1984], [1575, 2056], [1449, 2118], [1914, 1919], [1907, 1928], [1913, 1976], [1946, 1993],
  [1986, 2063], [2236, 1991], [2230, 2000], [2143, 2087], [2310, 2087], [1283, 2222],
  [1787, 2047], [1826, 2050], [1830, 2090], [1848, 2070], [1843, 2063], [1812, 2071], [1708, 2110], [1755, 2110],
  [1725, 2110], [1709, 2134], [1788, 2158], [1867, 2158], [1811, 2205], [1733, 2214], [1845, 2230], [1811, 2238],
  [1551, 2332], [1827, 2340], [2056, 2332], [1693, 2395], [1725, 2419], [1899, 2403], [2111, 2426], [1867, 2466],
  [1891, 2482], [1993, 2505], [2020, 2518], [2033, 2522], [2144, 2530], [2310, 2522],
  [2466, 1795], [2460, 1795], [2419, 1866], [2427, 1890], [2459, 1950, 56], [2435, 1929], [2515, 1953],
  [2893, 2092, 45], [2396, 2442], [2396, 2458],
];

function Sheets({ sheets }: { sheets: Sheet[] }) {
  return (
    <>
      {sheets.map((sheet, i) => (
        <g key={i} transform={`translate(${sheet.x} ${sheet.y})`}>
          {sheet.shapes.map((s, j) =>
            s.w ? (
              <path key={j} d={s.d} fill="none" stroke={s.c} strokeWidth={s.w} strokeLinejoin="round" strokeLinecap="round" />
            ) : (
              <path key={j} d={s.d} fill={s.c} />
            ),
          )}
        </g>
      ))}
    </>
  );
}

function Place({ x, y, name, size = 77, fill = "#555759", halo = "#dad9d7", italic = false }: { x: number; y: number; name: string; size?: number; fill?: string; halo?: string; italic?: boolean }) {
  return (
    <text
      x={x}
      y={y}
      fontSize={size}
      fill={fill}
      stroke={halo}
      strokeWidth={10}
      strokeOpacity={0.7}
      strokeLinejoin="round"
      paintOrder="stroke"
      fontStyle={italic ? "italic" : "normal"}
    >
      {name}
    </text>
  );
}

function AreaMap() {
  return (
    <svg
      viewBox="21 33 3438 2484"
      role="img"
      aria-label="Map of locations around Travis County"
      className="block aspect-[1146/828] w-full rounded-[72px] bg-[#dad9d7] font-['Noto_Sans',sans-serif] font-medium"
    >
      <defs>
        <clipPath id="county">
          <path d={`${REGION}L3460 2600L0 2600Z`} />
        </clipPath>
      </defs>
      <rect x="0" y="0" width="3480" height="2540" fill="#dad9d7" />
      <Sheets sheets={LAND} />
      <g clipPath="url(#county)">
        <rect x="0" y="0" width="3480" height="2540" fill="#cadbf0" />
        <Sheets sheets={COUNTY} />
      </g>

      <rect x="1379" y="1491" width="367" height="135" rx="10" fill="#c1a9d3" fillOpacity="0.8" stroke="#b295c5" strokeWidth="5" />
      <path d="M1470 1494L1610 1494L1615 1540L1485 1562Z" fill="#d8bcc0" />
      <Place x={1430} y={1588} name="US 183" fill="#83508f" halo="#c1a9d3" />

      <Place x={2180} y={80} name="County" fill="#a68fb3" italic />
      <Place x={1822} y={240} name="Georgetown" />
      <Place x={870} y={636} name="Leander" />
      <Place x={1000} y={980} name="Cedar Park" size={75} />
      <Place x={1758} y={1078} name="Round Rock" size={101} />
      <Place x={2696} y={838} name="Hutto" />
      <Place x={2178} y={1532} name="Pflugerville" size={75} fill="#4c5b71" halo="#cadbf0" />
      <Place x={2628} y={2178} name="Manor" fill="#4c5b71" halo="#cadbf0" />
      <Place x={108} y={2030} name="Lakeway" fill="#4c5b71" halo="#cadbf0" />
      <Place x={296} y={1587} name="Lake Travis" fill="#6292d2" halo="#b4d2ec" italic />
      <Place x={1226} y={2225} name="Travis County" size={75} fill="#8d86c2" halo="#cadbf0" italic />

      <g fill="none" strokeLinejoin="round">
        <path d={SLIVERS} stroke="#0a7be2" strokeWidth="20" />
        <path d={REGION} stroke="#747b90" strokeWidth="23" />
        <path d="M3398 2450L3470 2300" stroke="#747b90" strokeWidth="23" />
      </g>

      {PINS.map(([x, y, r = 33], i) => (
        <g key={i}>
          <circle cx={x} cy={y + 4} r={r + 8} fill="#3b4a63" fillOpacity="0.22" />
          <circle cx={x} cy={y + 3} r={r + 6} fill="#3b4a63" fillOpacity="0.3" />
          <circle cx={x} cy={y} r={r + 3} fill="#e55555" stroke="#ffffff" strokeWidth={r > 40 ? 9 : 6} />
        </g>
      ))}
    </svg>
  );
}

export default function App() {
  return (
    <div className="flex min-h-screen bg-white text-black">
      <aside className="w-[264px] shrink-0 bg-black pt-[904px]">
        <div className="h-8 w-6 bg-white" />
        <div className="mt-[72px] h-6 w-6 bg-white" />
        <div className="mt-16 h-8 w-6 bg-white" />
        <div className="mt-16 h-6 w-6 bg-white" />
      </aside>

      <main className="flex min-w-0 flex-1 flex-col">
        <div className="h-[104px]" />
        <div className="h-28 bg-black" />
        <article className="pt-[105px] pr-[86px] pb-[117px] pl-[93px]">
          <AreaMap />
          <h2 className="mt-[112px] max-w-[1060px] font-['Inter',sans-serif] text-[89px] leading-[90px] font-light">
            Feature goes here one particular feature can go here of course
          </h2>
          <p className="mt-[54px] max-w-[1060px] font-['Liberation_Mono',monospace] text-[48px] leading-[60px]">
            Secondary line to describe what this is in further detail of course
          </p>
          <a
            href="#learn-more"
            className="mt-[62px] inline-flex items-center gap-7 font-['Inter',sans-serif] text-[42px] leading-[60px] font-medium"
          >
            Learn More
            <svg viewBox="0 0 29 30" className="h-[30px] w-[29px]" aria-hidden="true">
              <path d="M0 0L29 15L0 30Z" fill="#231f20" />
            </svg>
          </a>
        </article>
        <div className="h-28 bg-black" />
        <div className="flex-1" />
      </main>
    </div>
  );
}
